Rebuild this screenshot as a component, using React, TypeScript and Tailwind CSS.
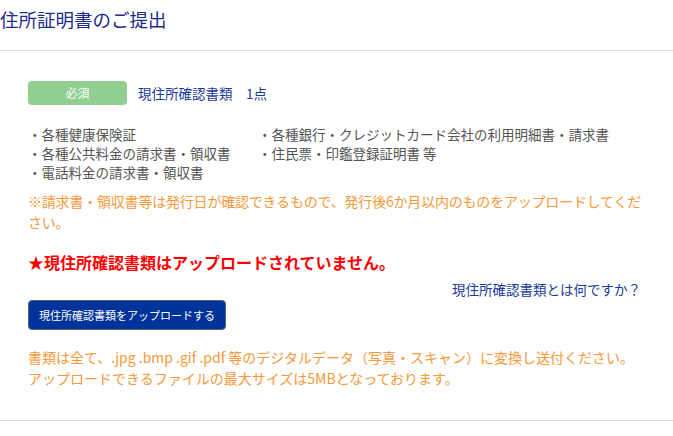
export default function App() {
  const left = ["各種健康保険証", "各種公共料金の請求書・領収書", "電話料金の請求書・領収書"]
  const right = ["各種銀行・クレジットカード会社の利用明細書・請求書", "住民票・印鑑登録証明書 等"]

  return (
    <div className="w-[673px] h-[436px] bg-white font-['Noto_Sans_CJK_JP','Noto_Sans',sans-serif] overflow-hidden">
      <div className="h-[51px] border-b border-[#dddddd] pt-[6px]">
        <h1 className="text-[18.5px] leading-[26px] text-[#1d2a8a]">住所証明書のご提出</h1>
      </div>

      <div className="pl-[28px] pr-[20px] pt-[30px] pb-[31px] border-b border-[#dddddd]">
        <div className="flex items-center h-[24px]">
          <span className="w-[99px] h-[24px] rounded-[4px] bg-[#90cf8f] text-white text-[12px] leading-[24px] text-center">
            必須
          </span>
          <span className="ml-[11px] text-[13.5px] text-[#1a3a98]">現住所確認書類　1点</span>
        </div>

        <div className="mt-[20px] flex text-[13.5px] leading-[19px] text-[#555555]">
          <ul className="w-[230px]">
            {left.map((t) => (
              <li key={t}>・{t}</li>
            ))}
          </ul>
          <ul>
            {right.map((t) => (
              <li key={t}>・{t}</li>
            ))}
          </ul>
        </div>

        <p className="mt-[9px] w-[625px] text-[14px] leading-[21px] text-[#f5993a] tracking-[-0.2px]">
          ※請求書・領収書等は発行日が確認できるもので、発行後6か月以内のものをアップロードしてください。
        </p>

        <p className="mt-[17px] text-[16px] leading-[24px] font-bold text-[#ff0000]">
          ★現住所確認書類はアップロードされていません。
        </p>

        <div className="mt-[6px] flex justify-end pr-[12px]">
          <a className="text-[13.5px] leading-[19px] text-[#1a3a98]">現住所確認書類とは何ですか？</a>
        </div>

        <button className="mt-[1px] w-[198px] h-[30px] rounded-[4px] bg-[#003399] border border-[#5a6080] text-white text-[11px] leading-[28px] text-center">
          現住所確認書類をアップロードする
        </button>

        <div className="mt-[17px] text-[14px] leading-[21px] text-[#f5993a]">
          <p>書類は全て、.jpg .bmp .gif .pdf 等のデジタルデータ（写真・スキャン）に変換し送付ください。</p>
          <p>アップロードできるファイルの最大サイズは5MBとなっております。</p>
        </div>
      </div>
    </div>
  )
}
